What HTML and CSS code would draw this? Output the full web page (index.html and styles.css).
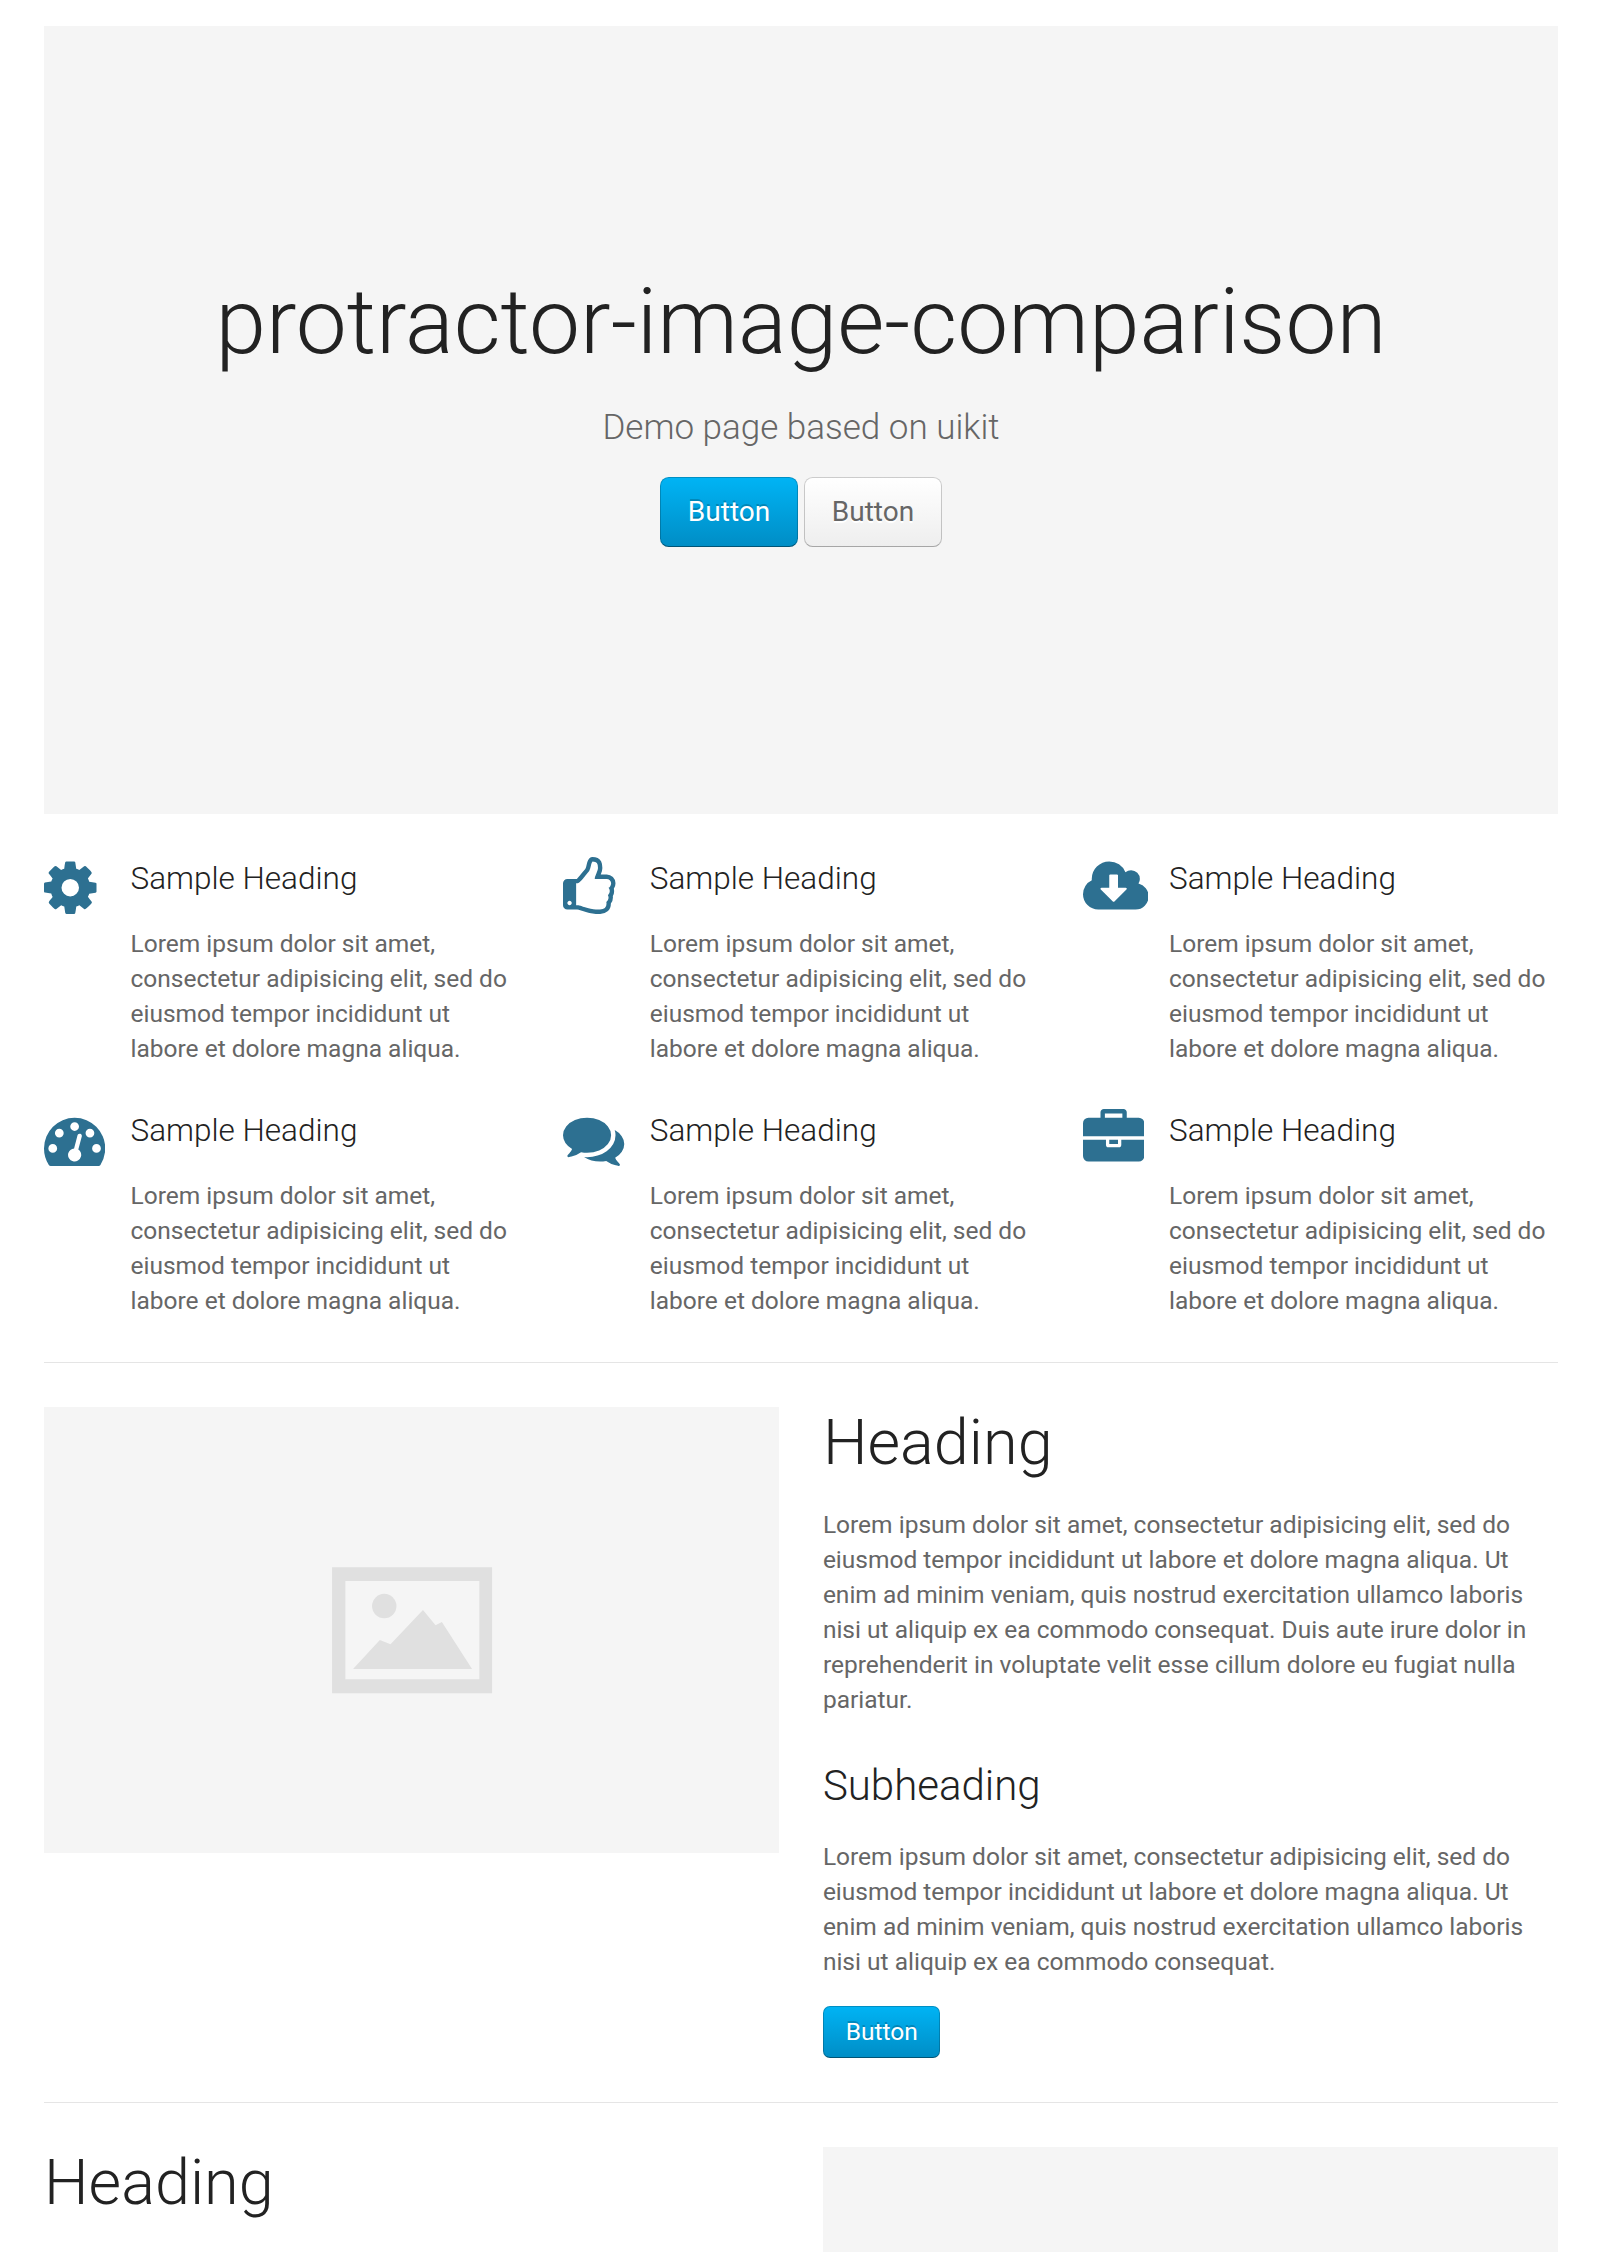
FILE: index.html
```html
<!DOCTYPE html>
<html lang="en">
<head>
<meta charset="utf-8">
<title>protractor-image-comparison</title>
<link rel="stylesheet" href="styles.css">
</head>
<body>
<main class="container">
  <header class="hero">
    <h1 class="hero-title">protractor-image-comparison</h1>
    <p class="hero-lead">Demo page based on uikit</p>
    <p class="hero-actions">
      <a class="button button-primary button-large">Button</a>
      <a class="button button-large">Button</a>
    </p>
  </header>

  <section class="features">
    <article class="feature">
      <div class="feature-icon"><svg class="icon" viewBox="128 0 1536 1792"><path d="M1152 896q0-106-75-181t-181-75-181 75-75 181 75 181 181 75 181-75 75-181zm512-109v222q0 12-8 23t-20 13l-185 28q-19 54-39 91 35 50 107 138 10 12 10 25t-9 23q-27 37-99 108t-94 71q-12 0-26-9l-138-108q-44 23-91 38-16 136-29 186-7 28-36 28h-222q-14 0-24.5-8.5t-11.5-21.5l-28-184q-49-16-90-37l-141 107q-10 9-25 9-14 0-25-11-126-114-165-168-7-10-7-23 0-12 8-23 15-21 51-66.5t54-70.5q-27-50-41-99l-183-27q-13-2-21-12.5t-8-23.5v-222q0-12 8-23t19-13l186-28q14-46 39-92-40-57-107-138-10-12-10-24 0-10 9-23 26-36 98.5-107.5t94.5-71.5q13 0 26 10l138 107q44-23 91-38 16-136 29-186 7-28 36-28h222q14 0 24.5 8.5t11.5 21.5l28 184q49 16 90 37l142-107q9-9 24-9 13 0 25 10 129 119 165 170 7 8 7 22 0 12-8 23-15 21-51 66.5t-54 70.5q26 50 41 98l183 28q13 2 21 12.5t8 23.5z"/></svg></div>
      <div class="feature-body">
        <h3 class="feature-title">Sample Heading</h3>
        <p class="text">Lorem ipsum dolor sit amet, consectetur adipisicing elit, sed do eiusmod tempor incididunt ut labore et dolore magna aliqua.</p>
      </div>
    </article>
    <article class="feature">
      <div class="feature-icon"><svg class="icon" viewBox="128 0 1536 1792"><path d="M384 1344q0-26-19-45t-45-19-45 19-19 45 19 45 45 19 45-19 19-45zm1152-576q0-51-39-89.5t-89-38.5h-352q0-58 48-159.5t48-160.5q0-98-32-145t-128-47q-26 26-38 85t-30.5 125.5-59.5 109.5q-22 23-77 91-4 5-23 30t-31.5 41-34.5 42.5-40 44-38.5 35.5-40 27-35.5 9h-32v640h32q13 0 31.5 3t33 6.5 38 11 35 11.5 35.5 12.5 29 10.5q211 73 342 73h121q192 0 192-167 0-26-5-56 30-16 47.5-52.5t17.5-73.5-18-69q53-50 53-119 0-25-10-55.5t-25-47.5q32-1 53.5-47t21.5-81zm128-1q0 89-49 163 9 33 9 69 0 77-38 144 3 21 3 43 0 101-60 178 1 139-85 219.5t-227 80.5h-129q-96 0-189.5-22.5t-216.5-65.5q-116-40-138-40h-288q-53 0-90.5-37.5t-37.5-90.5v-640q0-53 37.5-90.5t90.5-37.5h274q36-24 137-155 58-75 107-128 24-25 35.5-85.5t30.5-126.5 62-108q39-37 90-37 84 0 151 32.5t102 101.5 35 186q0 93-48 192h176q104 0 180 76t76 179z"/></svg></div>
      <div class="feature-body">
        <h3 class="feature-title">Sample Heading</h3>
        <p class="text">Lorem ipsum dolor sit amet, consectetur adipisicing elit, sed do eiusmod tempor incididunt ut labore et dolore magna aliqua.</p>
      </div>
    </article>
    <article class="feature">
      <div class="feature-icon"><svg class="icon" viewBox="0 0 1920 1792"><path d="M1280 928q0-14-9-23t-23-9h-224v-352q0-13-9.5-22.5t-22.5-9.5h-192q-13 0-22.5 9.5t-9.5 22.5v352h-224q-13 0-22.5 9.5t-9.5 22.5q0 14 9 23l352 352q9 9 23 9t23-9l351-351q10-12 10-24zm640 224q0 159-112.5 271.5t-271.5 112.5h-1088q-185 0-316.5-131.5t-131.5-316.5q0-130 70-240t188-165q-2-30-2-43 0-212 150-362t362-150q156 0 285.5 87t188.5 231q71-62 166-62 106 0 181 75t75 181q0 76-41 138 130 31 213.5 135.5t83.5 238.5z"/></svg></div>
      <div class="feature-body">
        <h3 class="feature-title">Sample Heading</h3>
        <p class="text">Lorem ipsum dolor sit amet, consectetur adipisicing elit, sed do eiusmod tempor incididunt ut labore et dolore magna aliqua.</p>
      </div>
    </article>
    <article class="feature">
      <div class="feature-icon"><svg class="icon" viewBox="0 0 1792 1792"><path d="M384 1152q0-53-37.5-90.5t-90.5-37.5-90.5 37.5-37.5 90.5 37.5 90.5 90.5 37.5 90.5-37.5 37.5-90.5zm192-448q0-53-37.5-90.5t-90.5-37.5-90.5 37.5-37.5 90.5 37.5 90.5 90.5 37.5 90.5-37.5 37.5-90.5zm428 481l101-382q6-26-7.5-48.5t-38.5-29.5-48 6.5-30 39.5l-101 382q-60 5-107 43.5t-63 98.5q-20 77 20 146t117 89 146-20 89-117q16-60-6-117t-72-91zm660-33q0-53-37.5-90.5t-90.5-37.5-90.5 37.5-37.5 90.5 37.5 90.5 90.5 37.5 90.5-37.5 37.5-90.5zm-640-640q0-53-37.5-90.5t-90.5-37.5-90.5 37.5-37.5 90.5 37.5 90.5 90.5 37.5 90.5-37.5 37.5-90.5zm448 192q0-53-37.5-90.5t-90.5-37.5-90.5 37.5-37.5 90.5 37.5 90.5 90.5 37.5 90.5-37.5 37.5-90.5zm320 448q0 261-141 483-19 29-54 29h-1402q-35 0-54-29-141-221-141-483 0-182 71-348t191-286 286-191 348-71 348 71 286 191 191 286 71 348z"/></svg></div>
      <div class="feature-body">
        <h3 class="feature-title">Sample Heading</h3>
        <p class="text">Lorem ipsum dolor sit amet, consectetur adipisicing elit, sed do eiusmod tempor incididunt ut labore et dolore magna aliqua.</p>
      </div>
    </article>
    <article class="feature">
      <div class="feature-icon"><svg class="icon" viewBox="0 0 1792 1792"><path d="M1408 768q0 139-94 257t-256.5 186.5-353.5 68.5q-86 0-176-16-124 88-278 128-36 9-86 16h-3q-11 0-20.5-8t-11.5-21q-1-3-1-6.5t.5-6.5 2-6l2.5-5 3.5-5.5 4-5 4.5-5 4-4.5q5-6 23-25t26-29.5 22.5-29 25-38.5 20.5-44q-124-72-195-177t-71-224q0-139 94-257t256.5-186.5 353.5-68.5 353.5 68.5 256.5 186.5 94 257zm384 256q0 120-71 224.5t-195 176.5q10 24 20.5 44t25 38.5 22.5 29 26 29.5 23 25q1 1 4 4.5t4.5 5 4 5 3.5 5.5l2.5 5 2 6 .5 6.5-1 6.5q-3 14-13 22t-22 7q-50-7-86-16-154-40-278-128-90 16-176 16-271 0-472-132 58 4 88 4 161 0 309-45t264-129q125-92 192-212t67-254q0-77-23-152 129 71 204 178t75 230z"/></svg></div>
      <div class="feature-body">
        <h3 class="feature-title">Sample Heading</h3>
        <p class="text">Lorem ipsum dolor sit amet, consectetur adipisicing elit, sed do eiusmod tempor incididunt ut labore et dolore magna aliqua.</p>
      </div>
    </article>
    <article class="feature">
      <div class="feature-icon"><svg class="icon" viewBox="0 0 1792 1792"><path d="M640 256h512v-128h-512v128zm1152 640v480q0 66-47 113t-113 47h-1472q-66 0-113-47t-47-113v-480h672v160q0 26 19 45t45 19h320q26 0 45-19t19-45v-160h672zm-768 0v128h-256v-128h256zm768-480v384h-1792v-384q0-66 47-113t113-47h352v-160q0-40 28-68t68-28h576q40 0 68 28t28 68v160h352q66 0 113 47t47 113z"/></svg></div>
      <div class="feature-body">
        <h3 class="feature-title">Sample Heading</h3>
        <p class="text">Lorem ipsum dolor sit amet, consectetur adipisicing elit, sed do eiusmod tempor incididunt ut labore et dolore magna aliqua.</p>
      </div>
    </article>
  </section>

  <hr class="divider">

  <section class="split">
    <svg class="placeholder" viewBox="0 0 735 446">
      <path fill-rule="evenodd" d="M288 160.3h160v126H288zM301.3 174v98.3h134V174z"/>
      <circle cx="340.2" cy="199" r="12.2"/>
      <path d="M309 262l26.8-29 10.7 4.3 32.4-34.3 12.6 15.3 6.3-3.3 30.2 47z"/>
    </svg>
    <div class="split-body">
      <h1 class="heading">Heading</h1>
      <p class="text">Lorem ipsum dolor sit amet, consectetur adipisicing elit, sed do eiusmod tempor incididunt ut labore et dolore magna aliqua. Ut enim ad minim veniam, quis nostrud exercitation ullamco laboris nisi ut aliquip ex ea commodo consequat. Duis aute irure dolor in reprehenderit in voluptate velit esse cillum dolore eu fugiat nulla pariatur.</p>
      <h2 class="subheading">Subheading</h2>
      <p class="text">Lorem ipsum dolor sit amet, consectetur adipisicing elit, sed do eiusmod tempor incididunt ut labore et dolore magna aliqua. Ut enim ad minim veniam, quis nostrud exercitation ullamco laboris nisi ut aliquip ex ea commodo consequat.</p>
      <a class="button button-primary split-action">Button</a>
    </div>
  </section>

  <hr class="divider">

  <section class="split">
    <div class="split-body">
      <h1 class="heading">Heading</h1>
    </div>
    <svg class="placeholder" viewBox="0 0 735 446">
      <path fill-rule="evenodd" d="M288 160.3h160v126H288zM301.3 174v98.3h134V174z"/>
      <circle cx="340.2" cy="199" r="12.2"/>
      <path d="M309 262l26.8-29 10.7 4.3 32.4-34.3 12.6 15.3 6.3-3.3 30.2 47z"/>
    </svg>
  </section>
</main>
</body>
</html>
```
FILE: styles.css
```css
* { box-sizing: border-box; }

body {
  margin: 0;
  background: #fff;
  color: #666;
  font: 400 24.5px/35px Roboto, "Liberation Sans", sans-serif;
}

h1, h2, h3, p { margin: 0; }

h1, h2, h3 { color: #222; font-weight: 300; }

.container {
  width: 1514px;
  height: 2252px;
  margin: 0 0 0 44px;
  padding-top: 26.25px;
  overflow: hidden;
}

.hero {
  display: flex;
  flex-direction: column;
  align-items: center;
  height: 787.5px;
  padding-top: 239.25px;
  background: #f5f5f5;
}

.hero-title { font-size: 91px; line-height: 112px; }

.hero-lead {
  margin-top: 26.25px;
  font-size: 35px;
  font-weight: 300;
  line-height: 47px;
}

.hero-actions { margin-top: 26.25px; }

.button {
  display: inline-block;
  padding: 0 21.75px;
  border: 1px solid rgba(0, 0, 0, .2);
  border-bottom-color: rgba(0, 0, 0, .3);
  border-radius: 7px;
  background: #f7f7f7 linear-gradient(to bottom, #fff, #eee) border-box;
  color: #666;
  font-size: 24.5px;
  line-height: 50.5px;
  text-shadow: 0 1.75px 0 #fff;
  vertical-align: middle;
}

.button-primary {
  border-bottom-color: rgba(0, 0, 0, .4);
  background: #009dd8 linear-gradient(to bottom, #00b4f5, #008dc5) border-box;
  color: #fff;
  text-shadow: 0 -1.75px 0 rgba(0, 0, 0, .2);
}

.button-large {
  padding: 0 26.75px;
  border-radius: 8.75px;
  font-size: 28px;
  line-height: 68px;
}

.features {
  display: grid;
  grid-template-columns: repeat(3, 1fr);
  gap: 43.75px;
  margin-top: 43.75px;
}

.feature { display: flex; }

.feature-icon { flex: 0 0 86.5px; }

.icon {
  display: block;
  height: 61.25px;
  margin-top: -.25px;
  fill: #2d7091;
}

.feature-title {
  margin-bottom: 26.25px;
  font-size: 31.5px;
  line-height: 42px;
}

.divider {
  height: 0;
  margin: 44px 0;
  border: 0;
  border-top: 1px solid #e5e5e5;
}

.split {
  display: grid;
  grid-template-columns: 1fr 1fr;
  align-items: start;
  gap: 43.75px;
}

.placeholder {
  display: block;
  width: 100%;
  background: #f5f5f5;
  fill: #e0e0e0;
}

.heading {
  margin-bottom: 27.75px;
  font-size: 63px;
  line-height: 72px;
}

.subheading {
  margin: 43.75px 0 26.25px;
  font-size: 42px;
  line-height: 52.5px;
}

.split-action { margin: 26.75px 0 -.75px; }
```
